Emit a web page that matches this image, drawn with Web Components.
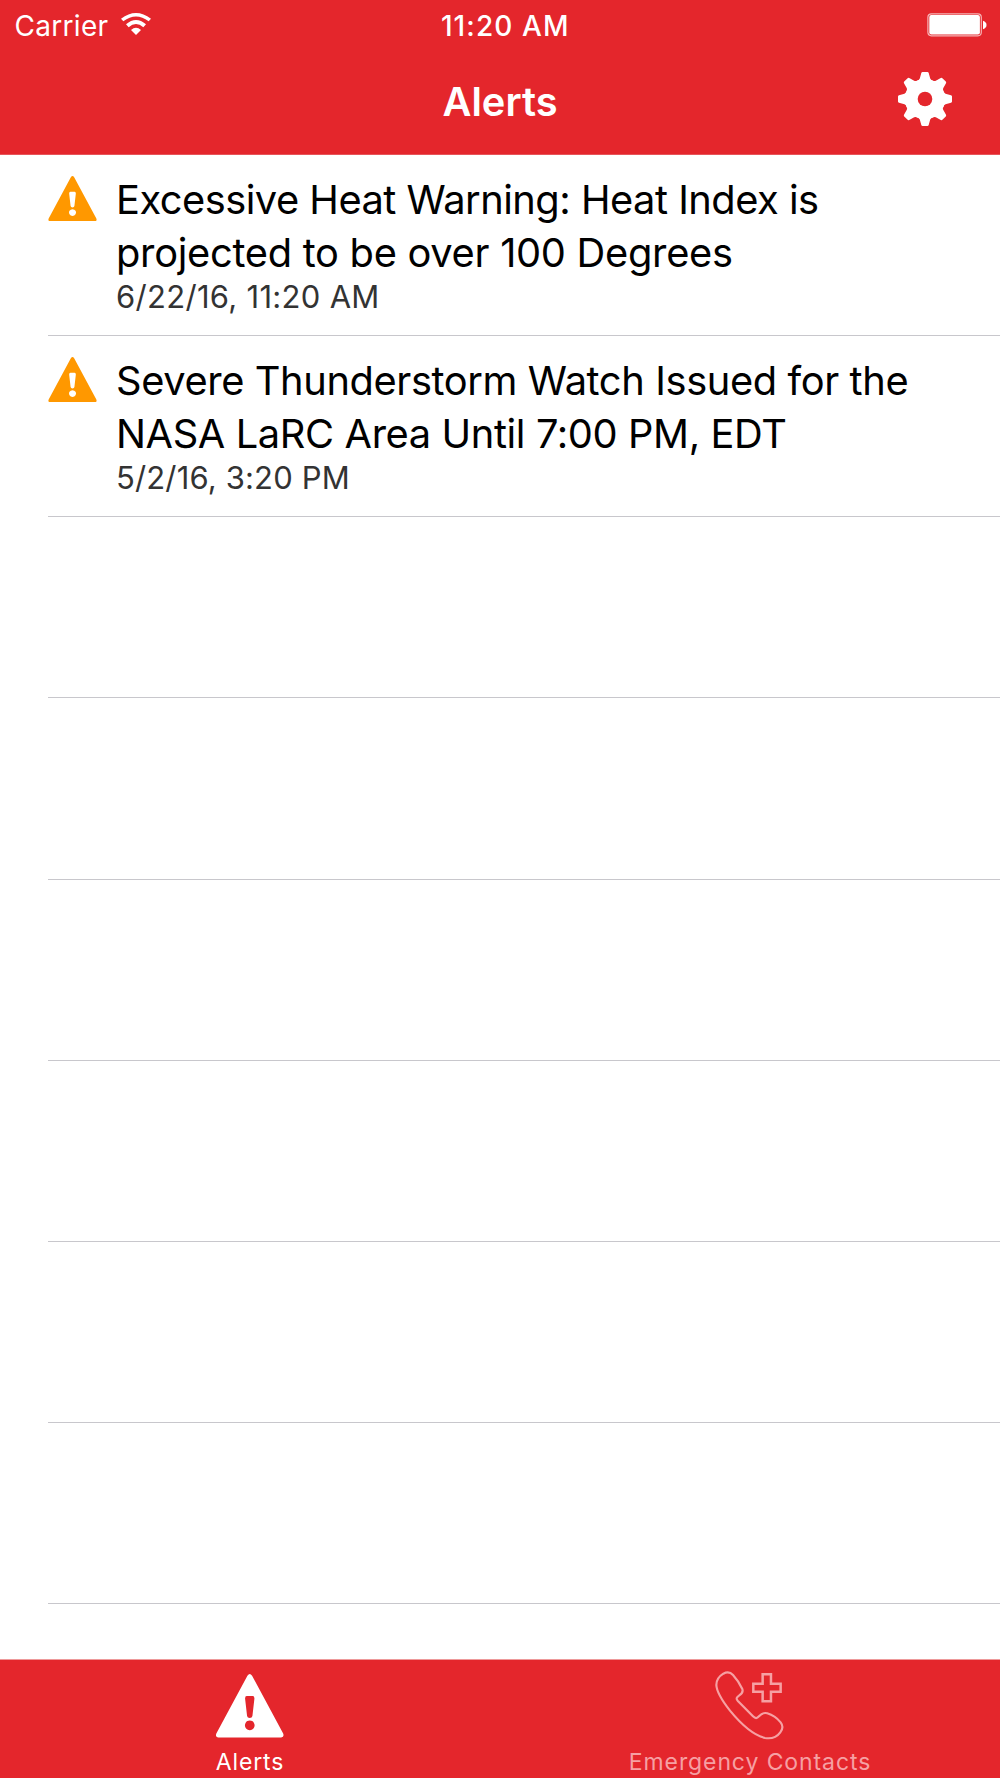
<!DOCTYPE html>
<html lang="en">
<head>
<meta charset="utf-8">
<title>Alerts</title>
<style>
  html, body { margin: 0; height: 100%; }
  body { font-family: Inter, "Liberation Sans", sans-serif; background: #fff; }
</style>
</head>
<body>
<alerts-app></alerts-app>

<script>
class WarningIcon extends HTMLElement {
  constructor() {
    super();
    this.attachShadow({ mode: 'open' });
    this.shadowRoot.innerHTML = `
      <style>
        :host { display: block; }
        svg { display: block; width: 100%; height: 100%; }
      </style>
      <svg viewBox="0 0 202 190">
        <path fill="currentColor" fill-rule="evenodd" d="M94 5Q101 -5 108 5L201 178Q205 189 195 190H7Q-3 189 1 178ZM92 66Q87 66 87 73L93 126Q94 132 101 132Q108 132 109 126L115 73Q115 66 110 66ZM101 139a14.5 14.5 0 1 0 .1 0Z"/>
      </svg>
    `;
  }
}

class StatusBar extends HTMLElement {
  constructor() {
    super();
    this.attachShadow({ mode: 'open' });
    this.shadowRoot.innerHTML = `
      <style>
        :host {
          display: grid;
          grid-template-columns: 1fr auto 1fr;
          height: 48px;
          padding: 0 13px 0 14.5px;
          box-sizing: border-box;
          color: #fff;
          font-size: 28px;
          line-height: 52px;
          white-space: nowrap;
        }
        .left { display: flex; }
        .carrier { width: 106.5px; letter-spacing: 0.3px; }
        .wifi { width: 30px; height: 22px; margin-top: 13px; }
        .time { font-weight: 500; letter-spacing: 1.1px; margin-left: 9px; }
        .battery { justify-self: end; width: 60px; height: 24px; margin-top: 13px; }
      </style>
      <div class="left">
        <span class="carrier">Carrier</span>
        <svg class="wifi" viewBox="0 0 90 66" fill="#fff">
          <path d="M0 17Q45 -17 90 17L83 25Q45 -4 7 25Z"/>
          <path d="M15 34Q45 8 75 34L67 43Q45 23 23 43Z"/>
          <path d="M30 51Q45 37 60 51L45 66Z"/>
        </svg>
      </div>
      <span class="time">11:20 AM</span>
      <svg class="battery" viewBox="0 0 60 24">
        <rect x=".9" y=".8" width="53.4" height="22" rx="3.5" fill="none" stroke="#fff" stroke-opacity=".65" stroke-width="1.2"/>
        <rect x="2.3" y="2" width="50.6" height="19.4" rx="2" fill="#fff"/>
        <path d="M56 7.8Q59.5 9 59.5 12T56 16.2Z" fill="#fff"/>
      </svg>
    `;
  }
}

class NavBar extends HTMLElement {
  constructor() {
    super();
    this.attachShadow({ mode: 'open' });
    const teeth = [0, 45, 90, 135, 180, 225, 270, 315]
      .map(a => `<path transform="rotate(${a})" d="M-9 -18Q-6 -18.5 -5.2 -20.5L-3.7 -26Q-3.4 -27 -2.4 -27H2.4Q3.4 -27 3.7 -26L5.2 -20.5Q6 -18.5 9 -18V-8H-9Z"/>`)
      .join('');
    this.shadowRoot.innerHTML = `
      <style>
        :host {
          display: grid;
          grid-template-columns: 1fr auto 1fr;
          height: 106px;
          padding: 0 48px;
          box-sizing: border-box;
          color: #fff;
        }
        h1 {
          grid-column: 2;
          margin: 0;
          font-size: 39.8px;
          font-weight: 600;
          line-height: 108px;
        }
        svg { justify-self: end; width: 54px; height: 54px; margin-top: 24px; }
      </style>
      <h1><slot></slot></h1>
      <svg viewBox="-27 -27 54 54" fill="#fff">
        ${teeth}
        <circle r="19.7"/>
        <circle r="7.3" fill="#e4262c"/>
      </svg>
    `;
  }
}

class AlertRow extends HTMLElement {
  constructor() {
    super();
    this.attachShadow({ mode: 'open' });
    this.shadowRoot.innerHTML = `
      <style>
        :host {
          display: flex;
          height: 181.16px;
          margin-left: 48px;
          box-sizing: border-box;
          border-bottom: 1px solid #c8c7cc;
        }
        warning-icon {
          flex: none;
          width: 49px;
          height: 45.3px;
          margin: 21px 19px 0 0;
          color: #ff9800;
        }
        .text { padding-top: 17.6px; white-space: nowrap; }
        .message { font-size: 39.8px; line-height: 53.3px; color: #000; }
        .date { font-size: 31px; line-height: 36px; color: #333; letter-spacing: var(--date-spacing, 0.3px); }
      </style>
    `;
  }

  connectedCallback() {
    const date = this.getAttribute('date');
    if (!date) return;
    this.shadowRoot.innerHTML += `
      <warning-icon></warning-icon>
      <div class="text">
        <div class="message"><slot></slot></div>
        <div class="date">${date}</div>
      </div>
    `;
  }
}

class TabItem extends HTMLElement {
  constructor() {
    super();
    this.attachShadow({ mode: 'open' });
    this.shadowRoot.innerHTML = `
      <style>
        :host {
          display: flex;
          flex-direction: column;
          align-items: center;
          flex: 1;
          color: #f6a0a3;
        }
        :host([selected]) { color: #fff; }
        .icon { height: 88px; box-sizing: border-box; }
        .label { font-size: 23px; line-height: 28px; white-space: nowrap; letter-spacing: 0.9px; }
      </style>
      <div class="icon"><slot name="icon"></slot></div>
      <div class="label"><slot></slot></div>
    `;
  }
}

class AlertsApp extends HTMLElement {
  constructor() {
    super();
    this.attachShadow({ mode: 'open' });
    this.shadowRoot.innerHTML = `
      <style>
        :host { display: flex; flex-direction: column; height: 1778px; overflow: hidden; }
        header { flex: none; height: 155px; box-sizing: border-box; background: #e4262c; border-bottom: 1px solid #e7555a; }
        main { flex: 1; min-height: 0; overflow: hidden; }
        footer { flex: none; display: flex; height: 119px; box-sizing: border-box; border-top: 1px solid #ee9a9b; background: #e4262c; }
        .l1 { letter-spacing: -0.5px; }
        .l2 { letter-spacing: -0.28px; }
        .l3 { letter-spacing: -0.38px; }
        .l4 { letter-spacing: -0.38px; }
        warning-icon { width: 67.5px; height: 63.5px; margin-top: 14px; }
        .phone { display: block; width: 73.3px; height: 70px; margin-top: 10px; }
      </style>
      <header>
        <status-bar></status-bar>
        <nav-bar>Alerts</nav-bar>
      </header>
      <main>
        <alert-row date="6/22/16, 11:20 AM"><span class="l1">Excessive Heat Warning: Heat Index is</span><br><span class="l2">projected to be over 100 Degrees</span></alert-row>
        <alert-row date="5/2/16, 3:20 PM" style="--date-spacing: 0.15px"><span class="l3">Severe Thunderstorm Watch Issued for the</span><br><span class="l4">NASA LaRC Area Until 7:00 PM, EDT</span></alert-row>
        ${'<alert-row></alert-row>'.repeat(6)}
      </main>
      <footer>
        <tab-item selected><warning-icon slot="icon"></warning-icon>Alerts</tab-item>
        <tab-item>
          <svg slot="icon" class="phone" viewBox="340 60 220 210" fill="none" stroke="currentColor" stroke-width="6.5">
            <path d="M371 71C382 65 392 66 400 75C411 87 421 102 428 117C431 125 428 130 419 136C410 142 409 146 414 152L460 199C467 206 472 206 478 199C487 189 493 187 503 190C519 195 532 204 543 217C550 226 549 238 542 247C531 262 515 267 496 264C462 256 423 221 391 182C369 154 351 127 350 105C350 91 358 79 371 71Z"/>
            <path stroke-width="7.5" d="M489 73H514V101H543V125H514V154H489V125H461V101H489Z"/>
          </svg>Emergency Contacts</tab-item>
      </footer>
    `;
  }
}

customElements.define('warning-icon', WarningIcon);
customElements.define('status-bar', StatusBar);
customElements.define('nav-bar', NavBar);
customElements.define('alert-row', AlertRow);
customElements.define('tab-item', TabItem);
customElements.define('alerts-app', AlertsApp);
</script>
</body>
</html>
